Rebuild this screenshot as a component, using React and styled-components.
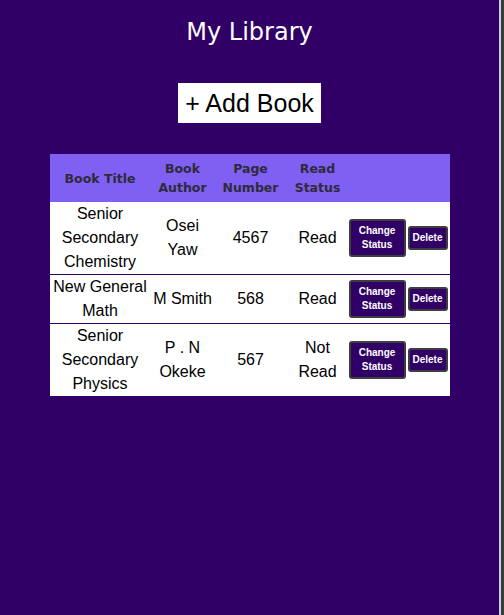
import React, { useState } from "react";
import styled, { createGlobalStyle } from "styled-components";

const GlobalStyle = createGlobalStyle`
    html, body {
        margin: 0;
        padding: 0;
        background-color: #300066;
    }
`;

const Page = styled.div`
    display: flex;
    min-height: 100vh;
`;

const Main = styled.div`
    flex: 1;
    display: flex;
    flex-direction: column;
    align-items: center;
`;

const Rail = styled.div`
    width: 2px;
    background-color: #cfcfd8;
    border-right: 3px solid #3c3c40;
`;

const Title = styled.h1`
    margin: 0;
    padding-top: 18px;
    font-family: "DejaVu Sans", sans-serif;
    font-size: 24px;
    font-weight: normal;
    color: white;
`;

const AddButton = styled.button`
    margin-top: 37px;
    height: 40px;
    padding: 0 7px;
    border: none;
    background-color: white;
    color: black;
    font-family: "Liberation Sans", Arial, sans-serif;
    font-size: 25px;
    cursor: pointer;
`;

const Table = styled.table`
    margin-top: 31px;
    width: 400px;
    table-layout: fixed;
    border-collapse: collapse;
    background-color: white;
`;

const HeadRow = styled.tr`
    height: 48px;
    background-color: #7f60f2;
`;

const HeadCell = styled.th`
    padding: 0 2px;
    font-family: "DejaVu Sans", sans-serif;
    font-size: 12.5px;
    font-weight: bold;
    line-height: 19px;
    color: #2e2a3a;
    text-align: center;
`;

const Row = styled.tr`
    border-bottom: ${(props) => (props.last ? "none" : "1px solid #300066")};
`;

const Cell = styled.td`
    padding: 0 1px;
    font-family: "Liberation Sans", Arial, sans-serif;
    font-size: 16px;
    line-height: 24px;
    color: black;
    text-align: center;
    vertical-align: middle;
`;

const ActionCell = styled(Cell)`
    padding: 0;
`;

const Actions = styled.div`
    display: flex;
    align-items: center;
    gap: 2px;
`;

const SmallButton = styled.button`
    width: ${(props) => props.width}px;
    padding: 3px 0;
    border: 2px solid #3e3e42;
    border-radius: 3px;
    background-color: #300066;
    color: white;
    font-family: "Liberation Sans", Arial, sans-serif;
    font-size: 10px;
    font-weight: bold;
    line-height: 14px;
    cursor: pointer;
`;

const startBooks = [
    { title: "Senior Secondary Chemistry", author: "Osei Yaw", pages: 4567, read: true },
    { title: "New General Math", author: "M Smith", pages: 568, read: true },
    { title: "Senior Secondary Physics", author: "P . N Okeke", pages: 567, read: false },
];

function App() {
    const [books, setBooks] = useState(startBooks);

    function changeStatus(index) {
        setBooks((prev) => prev.map((b, i) => (i === index ? { ...b, read: !b.read } : b)));
    }

    function deleteBook(index) {
        setBooks((prev) => prev.filter((b, i) => i !== index));
    }

    return (
        <Page>
            <GlobalStyle />
            <Main>
                <Title>My Library</Title>
                <AddButton>+ Add Book</AddButton>
                <Table>
                    <colgroup>
                        <col style={{ width: "101px" }} />
                        <col style={{ width: "64px" }} />
                        <col style={{ width: "72px" }} />
                        <col style={{ width: "62px" }} />
                        <col style={{ width: "101px" }} />
                    </colgroup>
                    <thead>
                        <HeadRow>
                            <HeadCell>Book Title</HeadCell>
                            <HeadCell>Book Author</HeadCell>
                            <HeadCell>Page Number</HeadCell>
                            <HeadCell>Read Status</HeadCell>
                            <HeadCell></HeadCell>
                        </HeadRow>
                    </thead>
                    <tbody>
                        {books.map((book, index) => (
                            <Row key={book.title} last={index === books.length - 1}>
                                <Cell>{book.title}</Cell>
                                <Cell>{book.author}</Cell>
                                <Cell>{book.pages}</Cell>
                                <Cell>{book.read ? "Read" : "Not Read"}</Cell>
                                <ActionCell>
                                    <Actions>
                                        <SmallButton width={57} onClick={() => changeStatus(index)}>Change Status</SmallButton>
                                        <SmallButton width={40} onClick={() => deleteBook(index)}>Delete</SmallButton>
                                    </Actions>
                                </ActionCell>
                            </Row>
                        ))}
                    </tbody>
                </Table>
            </Main>
            <Rail />
        </Page>
    );
}

export default App;
